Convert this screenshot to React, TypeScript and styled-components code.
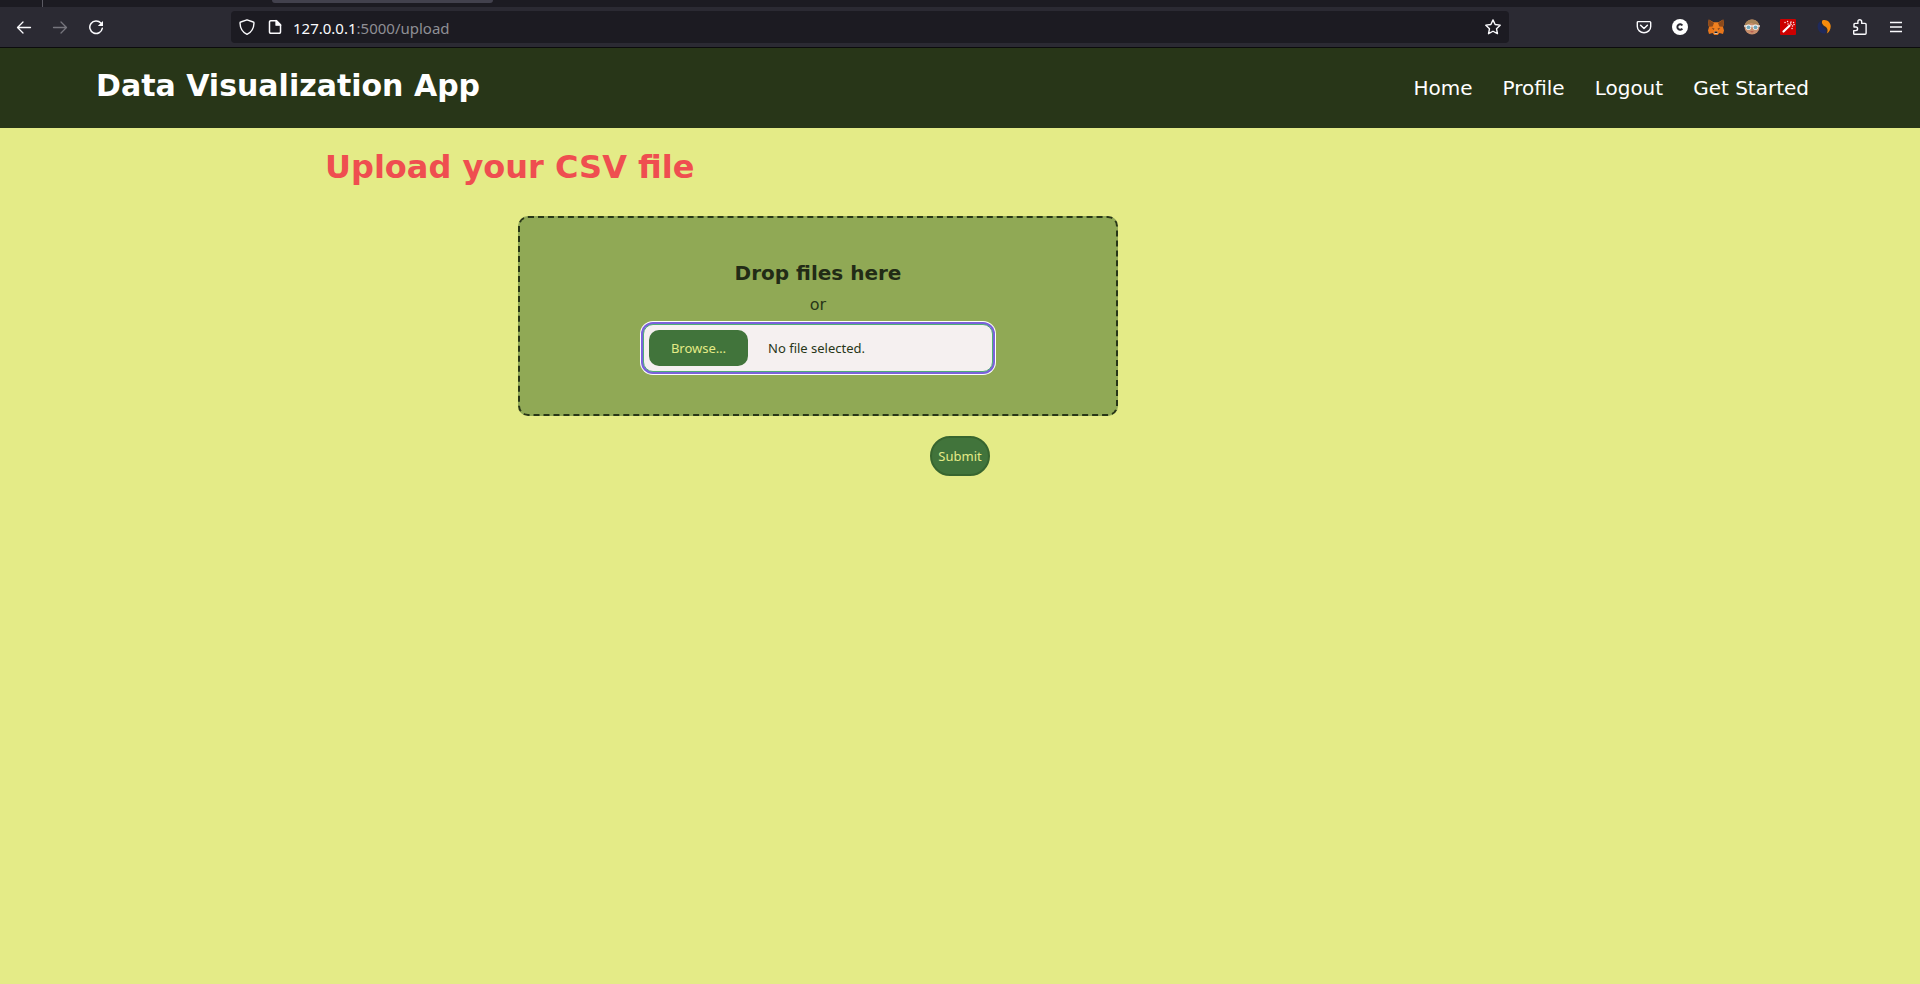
import React, { useState } from "react";
import styled, { createGlobalStyle } from "styled-components";

const uiFont = `"Noto Sans", "Open Sans", sans-serif`;
const pageFont = `"DejaVu Sans", sans-serif`;

const GlobalStyle = createGlobalStyle`
  *, *::before, *::after { box-sizing: border-box; }
  body {
    margin: 0;
    background: #e4eb87;
    color: #283618;
    font-family: ${pageFont};
    font-size: 16px;
  }
  h1, h2, h3, p, ul { margin: 0; padding: 0; }
`;

const Page = styled.div`
  display: flex;
  flex-direction: column;
  min-height: 100vh;
`;

/* Browser chrome */
const TabStrip = styled.div`
  display: flex;
  align-items: flex-start;
  height: 7px;
  padding-left: 42px;
  background: #1c1b22;
`;

const TabDivider = styled.span`
  width: 1px;
  height: 7px;
  background: #5b5a63;
`;

const ActiveTab = styled.span`
  width: 221px;
  height: 3px;
  margin-left: 229px;
  border-radius: 0 0 4px 4px;
  background: #42414d;
`;

const Toolbar = styled.div`
  display: flex;
  align-items: center;
  height: 41px;
  padding: 0 6px;
  border-bottom: 1px solid #0c0c0d;
  background: #2b2a33;
`;

const ToolButton = styled.button`
  display: flex;
  align-items: center;
  justify-content: center;
  flex: none;
  width: 36px;
  height: 32px;
  padding: 0;
  border: 0;
  border-radius: 4px;
  background: none;
  color: #fbfbfe;

  &:disabled { color: #76757d; }
  svg { display: block; }
`;

const AddressBar = styled.div`
  display: flex;
  align-items: center;
  flex: 1;
  min-width: 0;
  height: 32px;
  margin: 0 117px;
  padding: 0 8px;
  gap: 10px;
  border-radius: 4px;
  background: #1c1b22;
  color: #fbfbfe;

  svg { display: block; flex: none; }
`;

const SiteIdentity = styled.div`
  display: flex;
  gap: 12px;
`;

const Address = styled.a`
  flex: 1;
  padding-top: 2px;
  color: #8f8f95;
  font: 15px/20px ${uiFont};
  text-decoration: none;
`;

const Host = styled.span`
  color: #fbfbfe;
`;

/* Site */
const SiteHeader = styled.header`
  display: flex;
  align-items: flex-start;
  justify-content: space-between;
  height: 80px;
  padding: 19px 5% 0;
  background: #283618;
`;

const Brand = styled.h1`
  color: #ffffff;
  font-size: 30px;
  line-height: 38px;
`;

const NavList = styled.ul`
  display: flex;
  gap: 30px;
  padding-right: 15px;
  list-style: none;
`;

const NavLink = styled.a`
  color: #ffffff;
  font-size: 20px;
  line-height: 42px;
  text-decoration: none;
`;

const Content = styled.main`
  width: 100%;
  max-width: 1270px;
  margin: 0 auto;
  padding-top: 20px;
`;

const Title = styled.h2`
  color: #ef4e50;
  font-size: 32px;
  line-height: 38px;
`;

const UploadForm = styled.form`
  display: flex;
  flex-direction: column;
  margin-top: 30px;
  gap: 20px;
`;

const DropZone = styled.div`
  display: flex;
  flex-direction: column;
  align-items: center;
  width: 600px;
  max-width: 100%;
  height: 200px;
  margin-left: 193px;
  padding-top: 39px;
  border: 2px dashed #283618;
  border-radius: 10px;
  background: #90a955;
`;

const DropTitle = styled.h3`
  color: #222b16;
  font-size: 20px;
  line-height: 32px;
`;

const DropHint = styled.p`
  line-height: 32px;
`;

const FileField = styled.label`
  position: relative;
  display: flex;
  align-items: center;
  width: 350px;
  height: 48px;
  margin-top: 3px;
  padding: 5px;
  gap: 20px;
  border: 1px solid #4fae78;
  border-radius: 10px;
  background: #f5f0f0;
  box-shadow: 0 0 0 2px #7b62db, 0 0 0 3px #ffffff;
  color: #283618;
  font: 13px/20px ${uiFont};
  cursor: pointer;
`;

const FileInput = styled.input`
  position: absolute;
  inset: 0;
  width: 100%;
  height: 100%;
  opacity: 0;
  cursor: pointer;
`;

const BrowseLabel = styled.span`
  min-width: 99px;
  padding: 8px 20px;
  border-radius: 10px;
  background: #41743b;
  color: #e4eb87;
  text-align: center;
`;

const SubmitButton = styled.button`
  align-self: center;
  width: 60px;
  height: 40px;
  padding: 0;
  border: 2px solid #37652f;
  border-radius: 20px;
  background: #41743b;
  color: #e4eb87;
  font: 13px/20px ${uiFont};
`;

type IconProps = { children: React.ReactNode };

const Icon = ({ children }: IconProps) => (
  <svg
    width="16"
    height="16"
    viewBox="0 0 16 16"
    fill="none"
    stroke="currentColor"
    strokeWidth="1.3"
    strokeLinecap="round"
    strokeLinejoin="round"
    aria-hidden="true"
  >
    {children}
  </svg>
);

const BackIcon = () => <Icon><path d="M14.5 8.500H1.800M7 3 1.500 8.500 7 14" /></Icon>;
const ForwardIcon = () => <Icon><path d="M1.500 8.500h12.700M9 3 14.500 8.500 9 14" /></Icon>;
const ReloadIcon = () => (
  <Icon>
    <path d="M12.900 4.100A6.300 6.300 0 1 0 14.300 9.300" strokeWidth="1.500" />
    <path d="M15 2v4.700a.4.400 0 0 1-.4.400H9.800z" fill="currentColor" stroke="none" />
  </Icon>
);
const ShieldIcon = () => (
  <Icon>
    <path d="M8 .8 14.300 3c.5 0 .7.400.7.900C14.800 9.600 12.400 13.200 8 15.300 3.600 13.200 1.200 9.600 1 3.900c0-.5.200-.8.700-.9z" strokeWidth="1.400" />
  </Icon>
);
const DocumentIcon = () => (
  <Icon>
    <path d="M3.700 1.700h5.800l4 4v7.400a1.200 1.200 0 0 1-1.200 1.200H3.700a1.200 1.200 0 0 1-1.200-1.200V2.900a1.200 1.200 0 0 1 1.200-1.200z" strokeWidth="1.500" />
    <path d="M9 1.500v4.700h4.700z" fill="currentColor" />
  </Icon>
);
const StarIcon = () => (
  <Icon>
    <path d="m8 .9 2.150 4.600 5.050.65-3.700 3.500.95 5L8 12.250l-4.450 2.400.95-5L.8 6.150l5.050-.65z" strokeWidth="1.400" />
  </Icon>
);
const PocketIcon = () => (
  <Icon>
    <path d="M2.200 2.600h11.600c.5 0 .9.400.9.900v4a6.700 6.200 0 0 1-13.400 0v-4c0-.5.400-.9.900-.9z" strokeWidth="1.400" />
    <path d="M4.600 6.300 8 9.500l3.400-3.200" strokeWidth="1.500" />
  </Icon>
);
const CircleCIcon = () => (
  <Icon>
    <circle cx="8" cy="8" r="8" fill="#ffffff" stroke="none" />
    <path d="M10.300 6.500A2.700 2.700 0 1 0 10.300 9.600" stroke="#2b2a33" strokeWidth="2" strokeLinecap="butt" />
  </Icon>
);
const FoxIcon = () => (
  <Icon>
    <g stroke="none">
      <path d="M.8.500 6 3.600h4L15.200.500 16 5l-1 3 1 3.400-1 3.600-3.600-.9L9.800 16H6.200l-1.600-1.900L1 15 0 11.400 1 8 0 5z" fill="#e8761b" />
      <path d="M.8.500 6.200 4.300 4.500 7.500 1 7.800 0 5zM15.200.500 9.800 4.300l1.700 3.200 3.500.3L16 5z" fill="#8b4a1c" />
      <path d="M6 3.600h4l.9 5L9.800 13H6.200L5.100 8.600z" fill="#f0801f" />
      <path d="m3.700 9 2.800.6-.7 1.300zM12.300 9l-2.800.6.700 1.300z" fill="#70401f" />
      <path d="m6.200 13.200.6-.7h2.400l.6.700-.3 1.900h-3z" fill="#d9c7b5" />
      <path d="M6.700 12.500h2.600l.3 1.500H6.400z" fill="#1c1b22" />
    </g>
  </Icon>
);
const AvatarIcon = () => (
  <Icon>
    <g stroke="none">
      <circle cx="8" cy="8" r="7.500" fill="#c98f6c" />
      <path d="M.6 7.500C.6 3.500 4 .5 8 .5s7.400 3 7.400 7l-2.500-2.300C10 6 8.500 3.500 6.500 4.200 5 5 3 5 .6 7.500z" fill="#a88458" />
      <path d="M0 6.300h16v1.400H0z" fill="#e8e8e8" />
      <circle cx="4.500" cy="8.300" r="2.700" fill="#f3f3f3" />
      <circle cx="11.500" cy="8.300" r="2.700" fill="#f3f3f3" />
      <circle cx="4.500" cy="8.300" r="1.900" fill="#6fa6b8" />
      <circle cx="11.500" cy="8.300" r="1.900" fill="#6fa6b8" />
      <path d="M6 12.500q2-1.200 4 0-2 2-4 0z" fill="#b8584e" />
    </g>
  </Icon>
);
const WandIcon = () => (
  <Icon>
    <rect width="16" height="16" rx="1" fill="#cc0000" stroke="none" />
    <path d="m3.500 12.500 6-5.800" stroke="#ffffff" strokeWidth="2.200" />
    <path d="M5 3.500h.1M7.500 2.500h.1M8 5h.1M11 3h.1M13.500 3.500h.1M11 5.500h.1M12.500 7h.1M12 9.500h.1M10.500 4h.1M14 5.500h.1" stroke="#ffe5e5" strokeWidth="1.400" />
  </Icon>
);
const SwirlIcon = () => (
  <Icon>
    <g stroke="none">
      <path d="M5 1.800A7 7 0 0 0 8.500 14.800c1.800-.4 2.300-2.600 1-4.200C8 8.600 3.500 7.500 5 1.800z" fill="#1f2a5c" />
      <path d="M6.500 1.300c4-1.500 8 1.700 8.200 5.700.1 3.300-1.300 6-3.900 7.500 1.500-3 .7-5.500-1.600-7C6.500 6 5 3.600 6.500 1.300z" fill="#f68b0c" />
    </g>
  </Icon>
);
const PuzzleIcon = () => (
  <Icon>
    <path d="M2.500 15.200h10.600c.6 0 1-.4 1-1V5.400c0-.6-.4-1-1-1H9.700V2.700a1.900 1.900 0 0 0-3.800 0v1.700H3c-.6 0-1 .4-1 1V8h1.800a1.800 1.800 0 0 1 0 3.600H1.700v2.800c0 .5.300.8.800.8z" strokeWidth="1.400" />
  </Icon>
);
const MenuIcon = () => (
  <Icon>
    <path d="M2 3.500h12M2 8h12M2 12.500h12" strokeLinecap="butt" />
  </Icon>
);

const extensions = [
  { name: "Save to Pocket", icon: <PocketIcon /> },
  { name: "Clipper", icon: <CircleCIcon /> },
  { name: "Wallet", icon: <FoxIcon /> },
  { name: "Account", icon: <AvatarIcon /> },
  { name: "Magic wand", icon: <WandIcon /> },
  { name: "Web analytics", icon: <SwirlIcon /> },
  { name: "Extensions", icon: <PuzzleIcon /> },
  { name: "Menu", icon: <MenuIcon /> },
];

const navItems = ["Home", "Profile", "Logout", "Get Started"];

export default function App() {
  const [fileName, setFileName] = useState("No file selected.");

  return (
    <Page>
      <GlobalStyle />
      <TabStrip>
        <TabDivider />
        <ActiveTab />
      </TabStrip>
      <Toolbar>
        <ToolButton type="button" aria-label="Back"><BackIcon /></ToolButton>
        <ToolButton type="button" aria-label="Forward" disabled><ForwardIcon /></ToolButton>
        <ToolButton type="button" aria-label="Reload"><ReloadIcon /></ToolButton>
        <AddressBar>
          <SiteIdentity>
            <ShieldIcon />
            <DocumentIcon />
          </SiteIdentity>
          <Address href="/upload"><Host>127.0.0.1</Host>:5000/upload</Address>
          <StarIcon />
        </AddressBar>
        {extensions.map(({ name, icon }) => (
          <ToolButton key={name} type="button" aria-label={name}>{icon}</ToolButton>
        ))}
      </Toolbar>
      <SiteHeader>
        <Brand>Data Visualization App</Brand>
        <nav>
          <NavList>
            {navItems.map((item) => (
              <li key={item}><NavLink href="#">{item}</NavLink></li>
            ))}
          </NavList>
        </nav>
      </SiteHeader>
      <Content>
        <Title>Upload your CSV file</Title>
        <UploadForm onSubmit={(event) => event.preventDefault()}>
          <DropZone>
            <DropTitle>Drop files here</DropTitle>
            <DropHint>or</DropHint>
            <FileField>
              <FileInput
                type="file"
                accept=".csv"
                onChange={(event) =>
                  setFileName(event.target.files?.[0]?.name ?? "No file selected.")
                }
              />
              <BrowseLabel>Browse…</BrowseLabel>
              <span>{fileName}</span>
            </FileField>
          </DropZone>
          <SubmitButton type="submit">Submit</SubmitButton>
        </UploadForm>
      </Content>
    </Page>
  );
}
